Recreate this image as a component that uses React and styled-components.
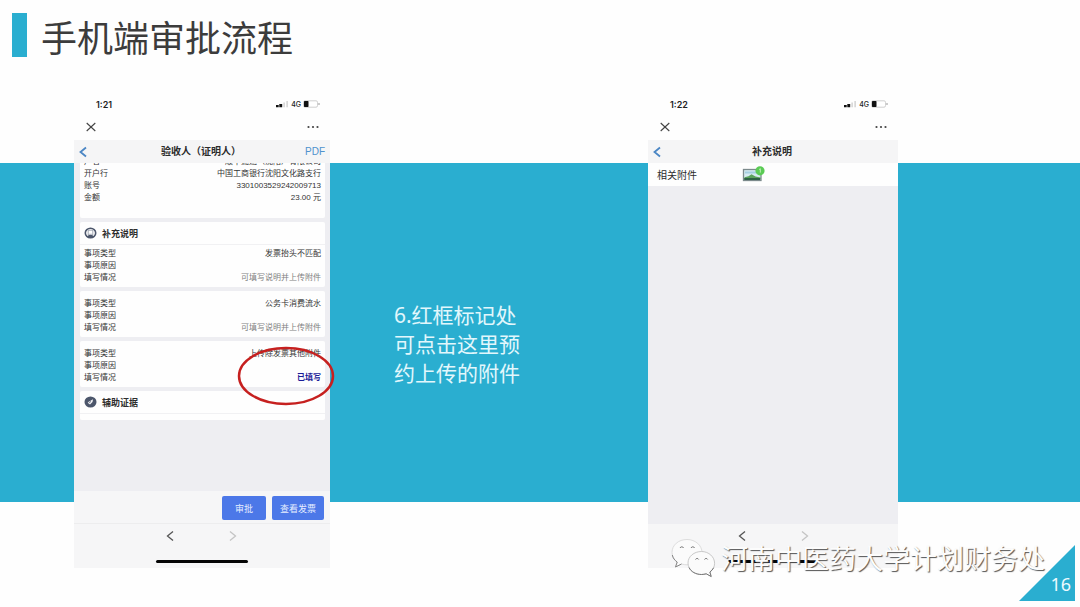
import React from "react";
import styled, { createGlobalStyle } from "styled-components";

const TEAL = "#2aaed0";

const GlobalStyle = createGlobalStyle`
  * {
    box-sizing: border-box;
  }
  body {
    margin: 0;
    background: #fefefe;
    font-family: "Liberation Sans", "Noto Sans CJK SC", sans-serif;
  }
  button {
    padding: 0;
    border: 0;
    background: none;
    font-family: inherit;
  }
  svg {
    display: block;
  }
`;

const Slide = styled.div`
  position: relative;
  min-height: 100vh;
  padding-bottom: 39px;
  overflow: hidden;
`;

const Header = styled.header`
  display: flex;
  align-items: flex-start;
  gap: 14px;
  height: 94px;
  padding: 13px 12px 0;
`;

const Marker = styled.div`
  width: 15px;
  height: 44px;
  background: ${TEAL};
`;

const Title = styled.h1`
  margin: 0;
  font-family: "Noto Sans CJK SC", sans-serif;
  font-size: 36px;
  font-weight: 400;
  line-height: 46px;
  color: #3c3c3c;
`;

const Stage = styled.main`
  display: grid;
  grid-template-columns:
    minmax(0, 256fr) minmax(0, 318fr) minmax(0, 250fr);
  padding: 0 16.85% 0 6.85%;
  background: linear-gradient(
    #fefefe 69px,
    ${TEAL} 69px,
    ${TEAL} 408px,
    #fefefe 408px
  );
`;

const Note = styled.p`
  align-self: center;
  max-width: 128px;
  margin: 26px 0 0 64px;
  font-family: "Noto Sans", "Noto Sans CJK SC", sans-serif;
  font-size: 21px;
  line-height: 29px;
  color: #e2f7fc;
`;

const PhoneFrame = styled.section`
  position: relative;
  display: flex;
  flex-direction: column;
  background: #fefefe;
`;

const StatusBar = styled.div`
  display: flex;
  align-items: center;
  height: 20px;
  padding: 0 10px 0 22px;
  gap: 2px;
  font-family: Inter, sans-serif;
  font-size: 7px;
  font-weight: 500;
  color: #222;
`;

const Time = styled.span`
  margin-right: auto;
  font-size: 9px;
  font-weight: 600;
`;

const WindowBar = styled.div`
  display: flex;
  align-items: center;
  justify-content: space-between;
  height: 26px;
  padding: 0 11px 0 12px;
`;

const NavBar = styled.div`
  display: grid;
  grid-template-columns: 32px 1fr 32px;
  align-items: center;
  height: 23px;
  padding: 0 5px 0 3px;
  background: #f5f5f6;
`;

const NavTitle = styled.h2`
  margin: 0;
  font-size: 10px;
  font-weight: 700;
  line-height: 14px;
  text-align: center;
  color: #2c2c2c;
`;

const PdfLink = styled.a`
  font-size: 10px;
  text-align: right;
  text-decoration: none;
  color: #4f92cd;
`;

const Body = styled.div`
  flex: 1;
  min-height: 328px;
  overflow: hidden;
  background: #eeeef2;
`;

// scrolled a little, so the first row goes under the nav bar
const CardList = styled.div`
  display: flex;
  flex-direction: column;
  gap: 4px;
  margin-top: -7px;
  padding: 0 5px 0 6px;
`;

const Card = styled.div`
  padding-bottom: ${(props) => props.$bottom || 3}px;
  border-radius: 2px;
  background: #fefefe;
`;

const CardHeader = styled.h3`
  display: flex;
  align-items: center;
  gap: 5px;
  height: 23px;
  margin: 0;
  padding: 0 4px;
  border-bottom: 1px solid #f1f1f3;
  font-size: 9px;
  font-weight: 700;
  color: #2e2e2e;
`;

const Rows = styled.dl`
  margin: 0;
  padding: ${(props) => props.$top || 0}px 4px 0;
`;

const Row = styled.div`
  display: flex;
  justify-content: space-between;
  height: 12px;
  font-size: 8px;
  line-height: 12px;
  color: #333;
`;

const Value = styled.dd`
  margin: 0;
  color: ${(props) =>
    ({ muted: "#808080", done: "#1c1c98" }[props.$tone] || "#333")};
  font-weight: ${(props) => (props.$tone === "done" ? 700 : 400)};
`;

const Actions = styled.div`
  display: flex;
  justify-content: flex-end;
  align-items: flex-end;
  gap: 6px;
  height: 33px;
  padding: 0 6px 3px;
  border-bottom: 1px solid #ededee;
  background: #f6f6f7;
`;

const ActionButton = styled.button`
  height: 24px;
  min-width: 44px;
  padding: 0 8px;
  border-radius: 2px;
  background: #4c78e8;
  font-size: 9px;
  color: #e6eeff;
`;

const BottomBar = styled.div`
  display: flex;
  flex-direction: column;
  align-items: center;
  justify-content: space-between;
  height: 44px;
  padding: 6px 0 5px;
  background: #f6f6f7;
`;

const Pager = styled.div`
  display: flex;
  gap: 51px;
`;

const HomeIndicator = styled.div`
  width: 36%;
  height: 3px;
  border-radius: 2px;
  background: #050505;
`;

const AttachmentRow = styled.div`
  display: flex;
  align-items: center;
  gap: 45px;
  height: 23px;
  padding: 0 9px;
  background: #fefefe;
  font-size: 10px;
  color: #2c2c2c;
`;

const RedCircle = styled.svg`
  position: absolute;
  top: 252px;
  right: -5px;
`;

const Watermark = styled.div`
  position: absolute;
  right: 35px;
  bottom: 28px;
  display: flex;
  align-items: center;
  gap: 5px;
  font-family: "Noto Sans CJK SC", sans-serif;
  font-size: 27px;
  line-height: 40px;
  white-space: nowrap;
  color: #fcfcfc;
  text-shadow: 1px 1px 1px #555;
`;

const PageNumber = styled.div`
  position: absolute;
  right: 5px;
  bottom: 6px;
  display: flex;
  align-items: flex-end;
  justify-content: flex-end;
  width: 56px;
  height: 56px;
  padding: 0 4px 4px 0;
  background: ${TEAL};
  clip-path: polygon(100% 0, 100% 100%, 0 100%);
  font-family: "Noto Sans", sans-serif;
  font-size: 18px;
  line-height: 26px;
  color: #ecfaff;
`;

function Chevron({ right, size = 12, color, width = 1.8 }) {
  return (
    <svg width={size} height={size} viewBox="0 0 12 12">
      <path
        d={right ? "M3 1.500 8.500 6 3 10.500" : "M9 1.500 3.500 6 9 10.500"}
        fill="none"
        stroke={color}
        strokeWidth={width}
      />
    </svg>
  );
}

function Signal() {
  return (
    <svg width="13" height="8" viewBox="0 0 13 8">
      <path d="M0 5h2.700v2.200H0zM3.300 4h2.900v3.200H3.300z" fill="#111" />
      <path d="M7.300 2.500h1.700V7.200H7.300zM10.300 1H12v6.200h-1.700z" fill="#d8d8d8" />
    </svg>
  );
}

function Battery() {
  return (
    <svg width="17" height="8" viewBox="0 0 17 8">
      <rect x=".5" y=".8" width="14" height="6.4" rx="1.5" fill="#fff" stroke="#c4c4c4" strokeWidth=".8" />
      <rect x="1" y="1.100" width="4.500" height="5.800" rx=".6" fill="#111" />
      <path d="M16 3v2" stroke="#999" />
    </svg>
  );
}

function SectionIcon({ type }) {
  return (
    <svg width="13" height="12" viewBox="0 0 13 12">
      {type === "note" ? (
        <>
          <ellipse cx="6.5" cy="6" rx="5.2" ry="4.7" fill="#fff" stroke="#4c566b" strokeWidth="1.6" />
          <path d="M4.200 3.200h4.600v5l-1.300-.9h-2l-1.300.9z" fill="#fff" stroke="#7d8596" strokeWidth=".7" />
          <path d="M3 9.600 5 8h3l2 1.600L8.200 11H4.800z" fill="#4c566b" />
        </>
      ) : (
        <>
          <ellipse cx="6.5" cy="6" rx="6" ry="5.5" fill="#4c566b" />
          <path d="m3.7 6.7 1.5-1.2L9 3.2 8.5 6 6 8.6z" fill="#f4f4f6" />
          <path d="m5.3 6.7 1.6-1.2" stroke="#4c566b" strokeWidth=".9" />
        </>
      )}
    </svg>
  );
}

function PictureIcon() {
  return (
    <svg width="24" height="18" viewBox="0 0 24 18" role="img" aria-label="附件">
      <rect x="1.5" y="3.500" width="17.500" height="11" fill="#d6ebf1" stroke="#7c8a8c" strokeWidth="1.300" />
      <path d="M3 5.500h11v2H3z" fill="#a5cfe0" />
      <path d="M2.500 12.800v-1.500l4-1 3-2 4 2.200 5 1v1.300z" fill="#5aa35b" />
      <path d="M2.200 12h16v2h-16z" fill="#2f6246" />
      <circle cx="18" cy="4.800" r="4.600" fill="#5bcb55" />
      <path d="m17.200 3.600 1.100-1v4" fill="none" stroke="#c9f5c2" strokeWidth=".9" />
    </svg>
  );
}

function WechatIcon() {
  return (
    <svg width="46" height="42" viewBox="0 0 46 42">
      <g fill="#fbfbfb" stroke="#d6d6d6" strokeWidth=".8">
        <path d="M17 2.500C8.500 2.500 2 8 2 15.500c0 4 2 7.200 5.200 9.500L5.500 30l6-3c1.800.5 3.600.8 5.500.8 8.500 0 15-5.300 15-12.300S25.500 2.500 17 2.500z" />
        <path
          d="M31.500 14.500C24 14.500 18 19.500 18 26S24 37.500 31.500 37.500c1.600 0 3.200-.3 4.700-.7l5 2.700-1.300-4.500c2.900-2 4.700-5.100 4.700-8.700 0-6.300-5.700-11.800-13.100-11.800z"
          stroke="#bbb"
        />
      </g>
      <g fill="none" stroke="#777" strokeWidth="1">
        <path d="M2.300 18c.6 3 2.400 5.400 4.900 7L5.500 30l6-3" stroke="#888" />
        <path d="M19 30.500c2 4.300 6.800 7 12.500 7 1.600 0 3.200-.3 4.700-.7l5 2.700-1.300-4.500c1.600-1.100 2.900-2.600 3.700-4.200" />
        <path d="M10 11c.6-1.600 3-1.600 3.600 0M21 11c.6-1.600 3-1.600 3.600 0M25.500 22.500c.6-1.400 2.600-1.400 3.200 0M34.500 22.500c.6-1.400 2.600-1.400 3.200 0" />
      </g>
    </svg>
  );
}

function Phone({ time, title, action, actions, overlay, children }) {
  return (
    <PhoneFrame>
      <StatusBar>
        <Time>{time}</Time>
        <Signal />
        <span>4G</span>
        <Battery />
      </StatusBar>
      <WindowBar>
        <button aria-label="关闭">
          <svg width="10" height="10" viewBox="0 0 10 10">
            <path d="m.7 1 8.600 8M9.300 1 .7 9" stroke="#444" strokeWidth="1.100" />
          </svg>
        </button>
        <button aria-label="更多">
          <svg width="12" height="4" viewBox="0 0 12 4" fill="#444">
            <circle cx="1.500" cy="2" r="1.100" />
            <circle cx="6" cy="2" r="1.100" />
            <circle cx="10.500" cy="2" r="1.100" />
          </svg>
        </button>
      </WindowBar>
      <NavBar>
        <button aria-label="返回">
          <Chevron color="#4b86c4" />
        </button>
        <NavTitle>{title}</NavTitle>
        {action}
      </NavBar>
      <Body>{children}</Body>
      {actions}
      <BottomBar>
        <Pager>
          <button aria-label="后退">
            <Chevron color="#555" width={1.3} />
          </button>
          <button aria-label="前进">
            <Chevron color="#c4c4c4" width={1.3} right />
          </button>
        </Pager>
        <HomeIndicator />
      </BottomBar>
      {overlay}
    </PhoneFrame>
  );
}

function RowList({ rows, top }) {
  return (
    <Rows $top={top}>
      {rows.map(([label, value, tone]) => (
        <Row key={label}>
          <dt>{label}</dt>
          <Value $tone={tone}>{value}</Value>
        </Row>
      ))}
    </Rows>
  );
}

const bankRows = [
  ["户名", "顺丰速运（沈阳）有限公司"],
  ["开户行", "中国工商银行沈阳文化路支行"],
  ["账号", "3301003529242009713"],
  ["金额", "23.00 元"],
];

const itemRows = (type, status, tone) => [
  ["事项类型", type],
  ["事项原因", ""],
  ["填写情况", status, tone],
];

function App() {
  return (
    <Slide>
      <GlobalStyle />
      <Header>
        <Marker />
        <Title>手机端审批流程</Title>
      </Header>
      <Stage>
        <Phone
          time="1:21"
          title="验收人（证明人）"
          action={<PdfLink href="#pdf">PDF</PdfLink>}
          actions={
            <Actions>
              <ActionButton>审批</ActionButton>
              <ActionButton>查看发票</ActionButton>
            </Actions>
          }
          overlay={
            <RedCircle width="98" height="60" viewBox="0 0 98 60">
              <ellipse cx="49" cy="30" rx="47" ry="28" fill="none" stroke="#c6201f" strokeWidth="2.500" />
            </RedCircle>
          }
        >
          <CardList>
            <Card $bottom={14}>
              <RowList rows={bankRows} />
            </Card>
            <Card>
              <CardHeader>
                <SectionIcon type="note" />
                补充说明
              </CardHeader>
              <RowList top={3} rows={itemRows("发票抬头不匹配", "可填写说明并上传附件", "muted")} />
            </Card>
            <Card>
              <RowList top={7} rows={itemRows("公务卡消费流水", "可填写说明并上传附件", "muted")} />
            </Card>
            <Card>
              <RowList top={7} rows={itemRows("上传除发票其他附件", "已填写", "done")} />
            </Card>
            <Card $bottom={6}>
              <CardHeader>
                <SectionIcon type="proof" />
                辅助证据
              </CardHeader>
            </Card>
          </CardList>
        </Phone>
        <Note>6.红框标记处可点击这里预约上传的附件</Note>
        <Phone time="1:22" title="补充说明">
          <AttachmentRow>
            <span>相关附件</span>
            <PictureIcon />
          </AttachmentRow>
        </Phone>
      </Stage>
      <Watermark>
        <WechatIcon />
        <span>河南中医药大学计划财务处</span>
      </Watermark>
      <PageNumber>16</PageNumber>
    </Slide>
  );
}

export default App;
